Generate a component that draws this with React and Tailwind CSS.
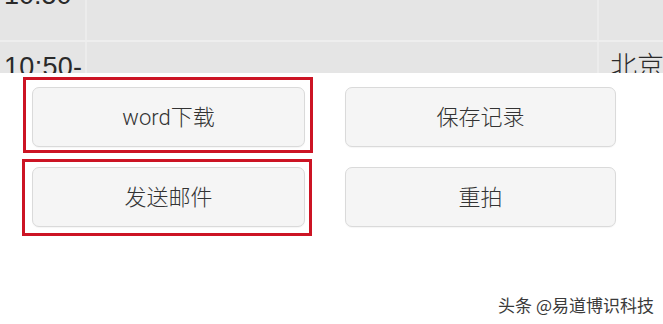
const latin = { fontFamily: '"Liberation Sans", "Noto Sans CJK SC", sans-serif' };
const light = { fontFamily: 'Roboto, "Noto Sans CJK SC", sans-serif' };

const ActionButton = ({ label, mark }) => (
  <div className="relative">
    {mark && (
      <div className={`pointer-events-none absolute border-[3px] border-[#cc1424] ${mark}`} />
    )}
    <button
      className="flex h-[60px] w-full items-center justify-center rounded-[7px] border border-[#dadada] bg-[#f5f5f5] text-[22px] font-light text-[#333] shadow-[0_1px_1px_rgba(0,0,0,0.04)]"
      style={light}
    >
      {label}
    </button>
  </div>
);

export default function App() {
  return (
    <div className="relative h-[324px] w-[663px] overflow-hidden bg-white" style={latin}>
      {/* table behind the sheet */}
      <div className="h-[73px] overflow-hidden bg-[#e5e5e5] text-[27px] text-[#2a2a2a]">
        <div className="grid h-[40px] grid-cols-[85px_2px_510px_2px_1fr]">
          <div className="pl-[4px]">
            <div className="-mt-[21px] leading-[33px]">10:50</div>
          </div>
          <div className="bg-[#ececec]" />
          <div />
          <div className="bg-[#ececec]" />
          <div />
        </div>
        <div className="h-[2px] bg-[#eeeeee]" />
        <div className="grid h-[60px] grid-cols-[85px_2px_510px_2px_1fr]">
          <div className="pl-[4px]">
            <div className="mt-[9px] leading-[33px] tracking-[0.3px]">10:50-</div>
          </div>
          <div className="bg-[#ececec]" />
          <div />
          <div className="bg-[#ececec]" />
          <div className="pl-[11px]">
            <div className="mt-[9px] whitespace-nowrap leading-[33px] font-light">北京</div>
          </div>
        </div>
      </div>

      {/* action sheet */}
      <div className="pl-[32px] pt-[14px]">
        <div className="grid grid-cols-[273px_271px] gap-x-[40px] gap-y-[20px]">
          <ActionButton label="word下载" mark="-left-[9px] -right-[8px] -top-[10px] -bottom-[6px]" />
          <ActionButton label="保存记录" />
          <ActionButton label="发送邮件" mark="-left-[10px] -right-[7px] -top-[8px] -bottom-[9px]" />
          <ActionButton label="重拍" />
        </div>
      </div>

      <div className="mt-[67px] flex justify-end pr-[9px]">
        <span
          className="text-[17px] leading-[22px] text-[#3a3a3a] [text-shadow:0_0_2px_#fff,0_0_2px_#fff]"
          style={{ fontFamily: '"Noto Sans CJK SC", sans-serif' }}
        >
          头条 @易道博识科技
        </span>
      </div>
    </div>
  );
}
